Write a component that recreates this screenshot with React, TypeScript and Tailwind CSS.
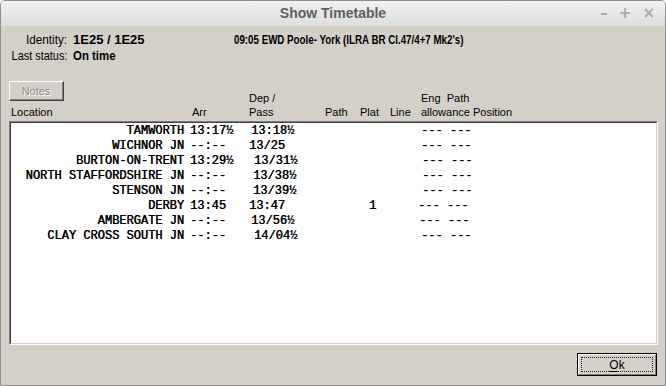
import React from 'react';

interface StopRow {
    location: string;
    arr: string;
    dep: string;
    depPad: string;
    plat: string;
    engPad: string;
}

const ROWS: StopRow[] = [
    { location: 'TAMWORTH', arr: '13:17½', dep: '13:18½', depPad: 'pl-[7px]', plat: '', engPad: 'pl-[3px]' },
    { location: 'WICHNOR JN', arr: '--:--', dep: '13/25', depPad: 'pl-[5px]', plat: '', engPad: 'pl-[3px]' },
    { location: 'BURTON-ON-TRENT', arr: '13:29½', dep: '13/31½', depPad: 'pl-[10px]', plat: '', engPad: 'pl-[4px]' },
    { location: 'NORTH STAFFORDSHIRE JN', arr: '--:--', dep: '13/38½', depPad: 'pl-[9px]', plat: '', engPad: 'pl-[4px]' },
    { location: 'STENSON JN', arr: '--:--', dep: '13/39½', depPad: 'pl-[9px]', plat: '', engPad: 'pl-[4px]' },
    { location: 'DERBY', arr: '13:45', dep: '13:47', depPad: 'pl-[5px]', plat: '1', engPad: 'pl-[0px]' },
    { location: 'AMBERGATE JN', arr: '--:--', dep: '13/56½', depPad: 'pl-[7px]', plat: '', engPad: 'pl-[1px]' },
    { location: 'CLAY CROSS SOUTH JN', arr: '--:--', dep: '14/04½', depPad: 'pl-[10px]', plat: '', engPad: 'pl-[3px]' },
];

const uiFont = "font-['Liberation_Sans',Arial,sans-serif]";

function TitleBar() {
    return (
        <div className="relative flex h-[25px] items-center justify-center bg-gradient-to-b from-[#f0f0f0] to-[#dedede]">
            <span className="font-['Liberation_Sans',sans-serif] text-[14px] font-bold text-[#5f5f5f]">
                Show Timetable
            </span>
            <div className="absolute right-[10px] top-0 flex h-full items-center gap-[11px] font-['DejaVu_Sans',sans-serif] text-[15px] font-bold text-[#a9a9a9]">
                <span>–</span>
                <span>+</span>
                <span>×</span>
            </div>
        </div>
    );
}

function SunkenPanel({ children }: { children: React.ReactNode }) {
    return (
        <div className="ml-[8px] h-[224px] w-[649px] border border-t-[#808080] border-l-[#808080] border-b-white border-r-white">
            <div className="h-full w-full border border-t-[#404040] border-l-[#404040] border-b-[#d4d0c8] border-r-[#d4d0c8] bg-white">
                {children}
            </div>
        </div>
    );
}

export default function App() {
    return (
        <div className={`flex h-[386px] w-[666px] flex-col overflow-hidden rounded-t-[5px] border border-[#8e8e8e] bg-[#d4d0c8] ${uiFont}`}>
            <TitleBar />

            {/* train summary, squeezed to look like a condensed face */}
            <div className="mt-[6px] flex h-[32px] flex-col whitespace-nowrap text-[13px] leading-[16px] text-black">
                <div className="flex">
                    <span className="inline-block w-[66px] origin-right scale-x-[0.9] text-right">Identity:</span>
                    <span className="ml-[6px] inline-block w-[161px] origin-left font-bold">1E25 / 1E25</span>
                    <span className="inline-block origin-left scale-x-[0.75] font-bold">
                        09:05 EWD Poole- York (ILRA BR Cl.47/4+7 Mk2's)
                    </span>
                </div>
                <div className="flex">
                    <span className="inline-block w-[66px] origin-right scale-x-[0.84] text-right">Last status:</span>
                    <span className="ml-[6px] inline-block origin-left scale-x-[0.88] font-bold">On time</span>
                </div>
            </div>

            {/* column headings */}
            <div className="mt-[17px] flex h-[38px] items-end pl-[8px] text-[11px] leading-[14px] text-black">
                <div className="flex w-[183px] flex-col items-start">
                    <button
                        disabled
                        className="mb-[4px] h-[20px] w-[55px] border border-t-white border-l-white border-b-[#404040] border-r-[#404040]"
                    >
                        <div className="flex h-full w-full items-center justify-center border-b border-r border-[#808080] text-[11px] text-[#8c8a86] [text-shadow:1px_1px_0_#ffffff]">
                            Notes
                        </div>
                    </button>
                    <span className="pl-[2px]">Location</span>
                </div>
                <span className="w-[57px]">Arr</span>
                <div className="flex w-[76px] flex-col">
                    <span>Dep /</span>
                    <span>Pass</span>
                </div>
                <span className="w-[35px]">Path</span>
                <span className="w-[30px]">Plat</span>
                <span className="w-[31px]">Line</span>
                <div className="flex flex-col whitespace-pre">
                    <span>Eng  Path</span>
                    <span>allowance Position</span>
                </div>
            </div>

            <div className="mt-[2px]">
                <SunkenPanel>
                    <div className="pt-[1px] font-['Liberation_Mono','Courier_New',monospace] text-[12px] leading-[15px] text-black [text-shadow:0.4px_0_0_#000]">
                        {ROWS.map((row) => (
                            <div key={row.location} className="flex whitespace-pre">
                                <span className="w-[173px] text-right">{row.location}</span>
                                <span className="w-[60px] pl-[6px]">{row.arr}</span>
                                <span className={`w-[118px] ${row.depPad}`}>{row.dep}</span>
                                <span className={`w-[56px] ${row.plat ? 'pl-[7px]' : ''}`}>{row.plat}</span>
                                <span className={row.engPad}>--- ---</span>
                            </div>
                        ))}
                    </div>
                </SunkenPanel>
            </div>

            <div className="mt-[8px] flex justify-end pr-[8px]">
                <button className="h-[23px] w-[80px] border border-black bg-[#d4d0c8]">
                    <div className="h-full w-full border border-t-white border-l-white border-b-[#808080] border-r-[#808080] p-[2px]">
                        <div className="flex h-full w-full items-center justify-center border border-dotted border-[#222] text-[12px] text-black">
                            <span className="underline underline-offset-2">O</span>k
                        </div>
                    </div>
                </button>
            </div>
        </div>
    );
}
